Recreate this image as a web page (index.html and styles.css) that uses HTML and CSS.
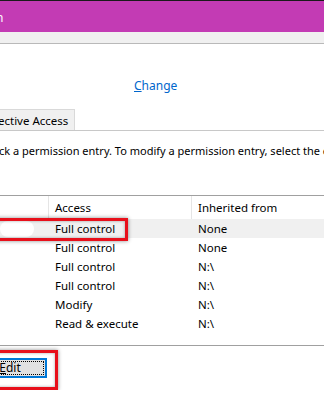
FILE: index.html
```html
<!DOCTYPE html>
<html lang="en">
<head>
    <meta charset="UTF-8">
    <title>Advanced Security Settings</title>
    <link rel="stylesheet" href="styles.css">
</head>
<body>
    <div class="window">
        <div class="title-bar">
            <span class="title-text">n</span>
        </div>
        <div class="menu-strip"></div>

        <div class="owner-row">
            <a href="#" class="change-link"><u>C</u>hange</a>
        </div>

        <div class="tabs">
            <div class="tab">ective Access</div>
        </div>

        <p class="hint">ck a permission entry. To modify a permission entry, select the entry and click Edit</p>

        <div class="perm-table">
            <div class="perm-row head">
                <div class="cell principal"></div>
                <div class="cell access">Access</div>
                <div class="cell inherited">Inherited from</div>
            </div>
            <div class="perm-row selected">
                <div class="cell principal"><span class="blurred-name"></span></div>
                <div class="cell access">Full control</div>
                <div class="cell inherited">None</div>
                <div class="callout row-callout"></div>
            </div>
            <div class="perm-row">
                <div class="cell principal"></div>
                <div class="cell access">Full control</div>
                <div class="cell inherited">None</div>
            </div>
            <div class="perm-row">
                <div class="cell principal"></div>
                <div class="cell access">Full control</div>
                <div class="cell inherited">N:\</div>
            </div>
            <div class="perm-row">
                <div class="cell principal"></div>
                <div class="cell access">Full control</div>
                <div class="cell inherited">N:\</div>
            </div>
            <div class="perm-row">
                <div class="cell principal"></div>
                <div class="cell access">Modify</div>
                <div class="cell inherited">N:\</div>
            </div>
            <div class="perm-row">
                <div class="cell principal"></div>
                <div class="cell access">Read &amp; execute</div>
                <div class="cell inherited">N:\</div>
            </div>
        </div>

        <div class="actions">
            <div class="callout edit-callout">
                <button class="edit-btn"><span class="focus-rect"><u>E</u>dit</span></button>
            </div>
        </div>
    </div>
</body>
</html>
```

FILE: styles.css
```css
* {
    margin: 0;
    padding: 0;
    box-sizing: border-box;
}

html {
    overflow: hidden;
}

body {
    font-family: 'Noto Sans', 'Segoe UI', sans-serif;
    font-size: 11px;
    color: #000;
    background: white;
    width: 324px;
    height: 400px;
    overflow: hidden;
}

.window {
    border-top: 1px solid #1a1a1a;
    overflow: hidden;
}

.title-bar {
    background: #c33bb4;
    height: 31px;
    display: flex;
    align-items: center;
}

.title-text {
    color: white;
    font-size: 12px;
    margin-left: -4px;
    padding-top: 2px;
}

.menu-strip {
    background: #f0f0f0;
    height: 12px;
    border-bottom: 1px solid #b9b9b9;
}

.owner-row {
    height: 65px;
    display: flex;
    align-items: center;
    padding-left: 134px;
    padding-top: 17px;
}

.change-link {
    color: #0066cc;
    text-decoration: none;
    font-size: 12px;
}

.change-link u {
    text-decoration-thickness: 1px;
}

.tabs {
    display: flex;
    border-bottom: 1px solid #c8c8c8;
}

.tab {
    height: 21px;
    padding: 0 6px 0 0;
    margin-left: -3px;
    background: #f0f0f0;
    border: 1px solid #d9d9d9;
    border-bottom: none;
    display: flex;
    align-items: center;
    white-space: nowrap;
    font-size: 11.5px;
}

.hint {
    margin-top: 13px;
    white-space: nowrap;
    margin-left: -1px;
    line-height: 14px;
}

.perm-table {
    margin-top: 37px;
    border-top: 1px solid #a0a0a0;
    font-size: 11.5px;
}

.perm-row {
    display: grid;
    grid-template-columns: 48px 143px 1fr;
    height: 19px;
    align-items: center;
    position: relative;
}

.perm-row.head {
    height: 23px;
}

.perm-row.head .cell {
    height: 23px;
    display: flex;
    align-items: center;
}

.perm-row.head .access,
.perm-row.head .inherited {
    border-left: 1px solid #e5e5e5;
    padding-left: 6px;
}

.cell {
    padding-left: 7px;
    white-space: nowrap;
}

.perm-row.selected {
    background: #f0f0f0;
}

.blurred-name {
    display: block;
    width: 34px;
    height: 16px;
    margin-left: -7px;
    background: white;
    border-radius: 8px;
}

.callout {
    border: 3px solid #e8101b;
    box-shadow: 0 0 4px rgba(0, 0, 0, 0.45), inset 0 0 3px rgba(0, 0, 0, 0.35);
}

.row-callout {
    position: absolute;
    left: -10px;
    top: -1px;
    width: 138px;
    height: 23px;
}

.actions {
    margin-top: 12px;
    border-top: 1px solid #a0a0a0;
    padding-top: 4px;
}

.edit-callout {
    display: inline-block;
    margin-left: -30px;
    padding: 5px 8px 9px 0;
}

.edit-btn {
    display: block;
    width: 74px;
    height: 20px;
    background: #e1e1e1;
    border: 2px solid #0078d7;
    font-family: inherit;
    font-size: 12px;
    padding: 1px;
    color: #000;
}

.focus-rect {
    display: block;
    height: 14px;
    border: 1px dotted #000;
    line-height: 12px;
    text-align: center;
}
```
